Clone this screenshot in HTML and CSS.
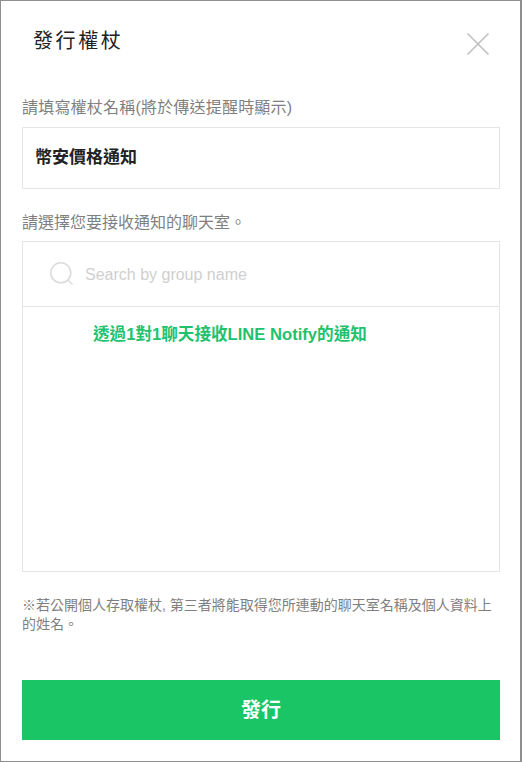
FILE: index.html
```html
<!DOCTYPE html>
<html lang="zh-Hant">
<head>
<meta charset="utf-8">
<title>發行權杖</title>
<link rel="stylesheet" href="styles.css">
</head>
<body>
<main class="dialog">
  <header class="head">
    <h1 class="title">發行權杖</h1>
    <button class="close" aria-label="close">
      <svg width="24" height="24" viewBox="0 0 24 24"><path d="M1.500 1.500 22.500 22.500M22.500 1.500 1.500 22.500" fill="none" stroke="#bdbdbd" stroke-width="1.5"/></svg>
    </button>
  </header>
  <label class="label label-name">請填寫權杖名稱(將於傳送提醒時顯示)</label>
  <div class="name-box">幣安價格通知</div>
  <label class="label label-room">請選擇您要接收通知的聊天室。</label>
  <section class="rooms">
    <div class="search">
      <svg class="search-icon" width="24" height="24" viewBox="0 0 24 24"><circle cx="10.800" cy="10.800" r="10" fill="none" stroke="#dcdcdc" stroke-width="1.6"/><path d="M17.800 18 22.500 22.500" fill="none" stroke="#dcdcdc" stroke-width="1.6"/></svg>
      <span class="placeholder">Search by group name</span>
    </div>
    <div class="room-item">透過1對1聊天接收LINE Notify的通知</div>
  </section>
  <p class="note">※若公開個人存取權杖, 第三者將能取得您所連動的聊天室名稱及個人資料上的姓名。</p>
  <button class="submit">發行</button>
</main>
</body>
</html>
```
FILE: styles.css
```css
* { box-sizing: border-box; }
html, body { margin: 0; padding: 0; background: #fff; }
body {
  width: 522px;
  height: 762px;
  overflow: hidden;
  font-family: "Liberation Sans", "Noto Sans CJK TC", sans-serif;
}
.dialog {
  width: 522px;
  height: 762px;
  padding: 0 20px 0 21px;
  border: solid #8f8f8f;
  border-width: 1px 2px 1px 1px;
  background: #fff;
  display: flex;
  flex-direction: column;
}
.head {
  height: 96px;
  padding: 26px 0 0 11px;
  display: flex;
  justify-content: space-between;
  align-items: flex-start;
}
.title {
  margin: 0;
  font-size: 20px;
  line-height: 28px;
  font-weight: 400;
  letter-spacing: 2.6px;
  color: #222;
}
.close {
  margin: 5px 10px 0 0;
  padding: 0;
  width: 24px;
  height: 24px;
  border: 0;
  background: none;
}
.close svg { display: block; }
.label {
  display: block;
  height: 22px;
  font-size: 16px;
  line-height: 22px;
  color: #7f7f7f;
  letter-spacing: 0.2px;
}
.label-name { margin-bottom: 8px; }
.label-room { margin-top: 23px; margin-bottom: 7px; letter-spacing: 0; }
.name-box {
  height: 62px;
  border: 1px solid #e5e5e5;
  padding: 0 12px;
  font-size: 17px;
  line-height: 60px;
  font-weight: 700;
  color: #222;
}
.rooms {
  height: 331px;
  border: 1px solid #e5e5e5;
}
.search {
  height: 65px;
  border-bottom: 1px solid #e5e5e5;
  padding: 2px 0 0 27px;
  display: flex;
  align-items: center;
}
.search-icon { flex: none; margin: -2px 11px 0 0; }
.placeholder {
  font-size: 16px;
  color: #cfcfcf;
}
.room-item {
  padding: 17px 0 0 70px;
  font-size: 16.6px;
  line-height: 22px;
  font-weight: 700;
  color: #22c26c;
}
.note {
  margin: 24px 0 0;
  height: 47px;
  font-size: 14px;
  line-height: 19px;
  color: #7f7f7f;
}
.submit {
  margin-top: 37px;
  height: 60px;
  width: 100%;
  border: 0;
  padding: 0 0 4px;
  background: #19c564;
  color: #fff;
  font-family: inherit;
  font-size: 20px;
  font-weight: 700;
}
```
